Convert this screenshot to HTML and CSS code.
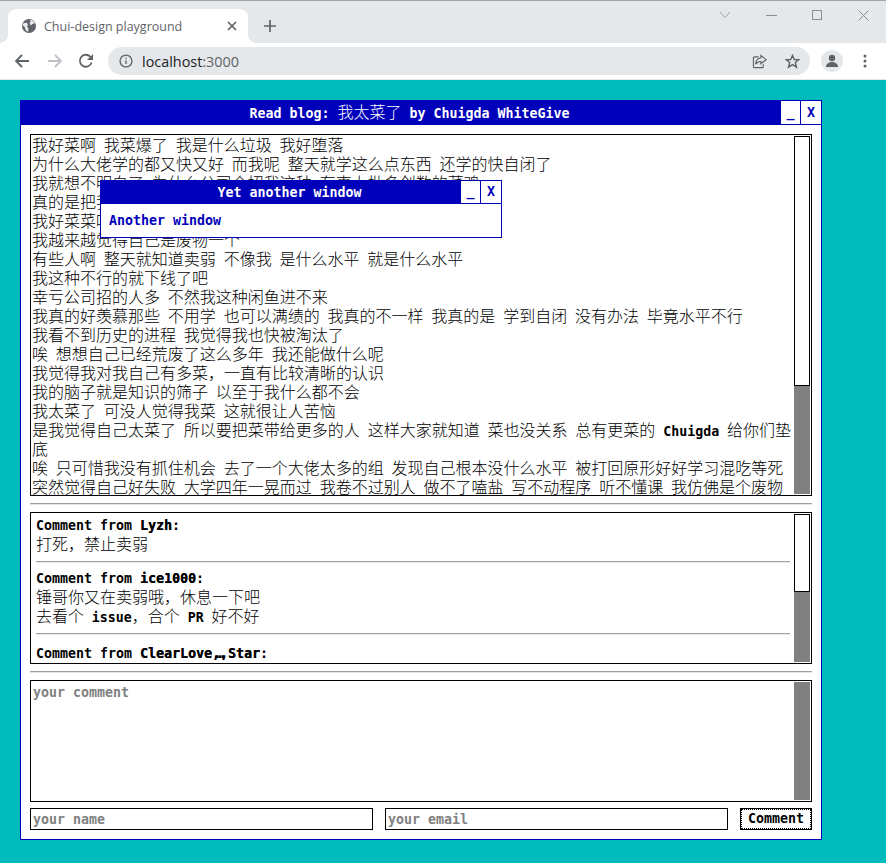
FILE: index.html
```html
<!DOCTYPE html>
<html lang="zh-CN">
<head>
<meta charset="utf-8">
<title>Chui-design playground</title>
<link rel="stylesheet" href="styles.css">
</head>
<body>
<header class="browser">
  <div class="tabstrip">
    <div class="tab">
      <svg class="favicon" viewBox="0 0 16 16" width="16" height="16"><circle cx="8" cy="8" r="7" fill="#5f6368"/><path d="M2 5.5 5.5 4.5 7 6.5 6 8.5 7.5 10.5 7 14 4.5 12 4 9.5 2 7.5zM9 1.8l3.5 1.2 1.5 2.5-2.5.2L10 7.5 8.5 5.5 9.5 4z" fill="#e8eaed"/></svg>
      <span class="tab-title">Chui-design playground</span>
      <svg class="tab-close" viewBox="0 0 10 10" width="10" height="10"><path d="M1 1l8 8M9 1 1 9" stroke="#5f6368" stroke-width="1.7" fill="none"/></svg>
    </div>
    <svg class="newtab" viewBox="0 0 12 12" width="12" height="12"><path d="M6 0v12M0 6h12" stroke="#5f6368" stroke-width="1.7" fill="none"/></svg>
    <div class="winctl">
      <svg class="wc wc-chev" viewBox="0 0 12 8" width="12" height="8"><path d="M1 1l5 5.5L11 1" stroke="#9aa0a6" fill="none"/></svg>
      <svg class="wc wc-min" viewBox="0 0 11 1" width="11" height="1"><path d="M0 .5h11" stroke="#8a8d90"/></svg>
      <svg class="wc wc-max" viewBox="0 0 10 10" width="10" height="10"><rect x=".5" y=".5" width="9" height="9" stroke="#8a8d90" fill="none"/></svg>
      <svg class="wc wc-x" viewBox="0 0 11 11" width="11" height="11"><path d="M.5.5l10 10M10.5.5l-10 10" stroke="#8a8d90" fill="none"/></svg>
    </div>
  </div>
  <div class="toolbar">
    <svg class="nav" viewBox="0 0 16 16" width="16" height="16"><path d="M15 8H2.5M8 2 2 8l6 6" stroke="#5f6368" stroke-width="1.8" fill="none"/></svg>
    <svg class="nav" viewBox="0 0 16 16" width="16" height="16"><path d="M1 8h12.5M8 2l6 6-6 6" stroke="#bdc1c6" stroke-width="1.8" fill="none"/></svg>
    <svg class="nav nav-reload" viewBox="0 0 16 16" width="16" height="16"><path d="M13.6 9.5A6 6 0 1 1 12.2 3.6L14 5.4" stroke="#5f6368" stroke-width="1.8" fill="none"/><path d="M15 1v6H9z" fill="#5f6368"/></svg>
    <div class="omnibox">
      <svg viewBox="0 0 16 16" width="14" height="14"><circle cx="8" cy="8" r="6.8" stroke="#5f6368" stroke-width="1.5" fill="none"/><path d="M8 7v4.5M8 4.2v1.6" stroke="#5f6368" stroke-width="1.5"/></svg>
      <span class="url">localhost<span class="url-port">:3000</span></span>
      <svg class="omni-share" viewBox="0 0 16 16" width="15" height="15"><path d="M7 3H2.5A1 1 0 0 0 1.500 4v9.500a1 1 0 0 0 1 1H11a1 1 0 0 0 1-1V11" stroke="#5f6368" stroke-width="1.200" fill="none"/><path d="M9.500 1.500 15 6l-5.500 4.500V8C7 8 5 9 4 11c0-4 2-6.500 5.500-7z" stroke="#5f6368" stroke-width="1.200" fill="none"/></svg>
      <svg class="omni-star" viewBox="0 0 16 16" width="15" height="15"><path d="M8 1.500 9.900 6h4.800l-3.700 3.100 1.200 4.900L8 11.300 3.800 14 5 9.100 1.300 6h4.800z" stroke="#5f6368" stroke-width="1.500" fill="none"/></svg>
    </div>
    <div class="avatar"><svg viewBox="0 0 16 16" width="16" height="16"><circle cx="8" cy="5" r="3.200" fill="#5f6368"/><path d="M2 14c0-3.500 3-5 6-5s6 1.500 6 5z" fill="#5f6368"/></svg></div>
    <svg class="kebab" viewBox="0 0 4 14" width="4" height="14"><circle cx="2" cy="2" r="1.500" fill="#5f6368"/><circle cx="2" cy="7" r="1.500" fill="#5f6368"/><circle cx="2" cy="12" r="1.500" fill="#5f6368"/></svg>
  </div>
</header>
<main class="desktop">
  <section class="window main-window">
    <div class="titlebar">
      <div class="title">Read blog: <span class="zh">我太菜了</span> by Chuigda WhiteGive</div>
      <button class="winbtn">_</button><button class="winbtn winbtn-x">X</button>
    </div>
    <div class="window-body">
      <div class="panel panel-blog">
        <div class="blog-text">
          <div class="zh-line">我好菜啊 我菜爆了 我是什么垃圾 我好堕落</div>
          <div class="zh-line">为什么大佬学的都又快又好 而我呢 整天就学这么点东西 还学的快自闭了</div>
          <div class="zh-line">我就想不明白了 为什么公司会招我这种 有事上批多创数的菜鸡</div>
          <div class="zh-line">真的是把我自己菜哭了</div>
          <div class="zh-line">我好菜菜呢</div>
          <div class="zh-line">我越来越觉得自己是废物一个</div>
          <div class="zh-line">有些人啊 整天就知道卖弱 不像我 是什么水平 就是什么水平</div>
          <div class="zh-line">我这种不行的就下线了吧</div>
          <div class="zh-line">幸亏公司招的人多 不然我这种闲鱼进不来</div>
          <div class="zh-line">我真的好羡慕那些 不用学 也可以满绩的 我真的不一样 我真的是 学到自闭 没有办法 毕竟水平不行</div>
          <div class="zh-line">我看不到历史的进程 我觉得我也快被淘汰了</div>
          <div class="zh-line">唉 想想自己已经荒废了这么多年 我还能做什么呢</div>
          <div class="zh-line">我觉得我对我自己有多菜，一直有比较清晰的认识</div>
          <div class="zh-line">我的脑子就是知识的筛子 以至于我什么都不会</div>
          <div class="zh-line">我太菜了 可没人觉得我菜 这就很让人苦恼</div>
          <div class="zh-line">是我觉得自己太菜了 所以要把菜带给更多的人 这样大家就知道 菜也没关系 总有更菜的 <b class="en">Chuigda</b> 给你们垫底</div>
          <div class="zh-line">唉 只可惜我没有抓住机会 去了一个大佬太多的组 发现自己根本没什么水平 被打回原形好好学习混吃等死</div>
          <div class="zh-line">突然觉得自己好失败 大学四年一晃而过 我卷不过别人 做不了嗑盐 写不动程序 听不懂课 我仿佛是个废物</div>
        </div>
        <div class="scrollbar"><div class="thumb thumb-blog"></div></div>
      </div>
      <hr class="sep">
      <div class="panel panel-comments">
        <div class="comments">
          <div class="comment-head"><b class="en">Comment from <span class="author">Lyzh</span>:</b></div>
          <div class="zh-line">打死，禁止卖弱</div>
          <hr class="comment-sep">
          <div class="comment-head"><b class="en">Comment from <span class="author">ice1000</span>:</b></div>
          <div class="zh-line">锤哥你又在卖弱哦，休息一下吧</div>
          <div class="zh-line">去看个 <b class="en">issue</b>，合个 <b class="en">PR</b> 好不好</div>
          <hr class="comment-sep comment-sep-last">
          <div class="comment-head"><b class="en">Comment from <span class="author">ClearLove<span class="author-gap">,…</span>,Star</span>:</b></div>
        </div>
        <div class="scrollbar"><div class="thumb thumb-comments"></div></div>
      </div>
      <hr class="sep">
      <div class="panel panel-editor">
        <textarea class="comment-input" placeholder="your comment"></textarea>
        <div class="scrollbar"></div>
      </div>
      <form class="comment-form">
        <input class="field" placeholder="your name">
        <input class="field" placeholder="your email">
        <button class="submit" type="button"><span class="submit-inner">Comment</span></button>
      </form>
    </div>
  </section>
  <section class="window float-window">
    <div class="titlebar">
      <div class="title">Yet another window</div>
      <button class="winbtn">_</button><button class="winbtn winbtn-x">X</button>
    </div>
    <div class="float-body">Another window</div>
  </section>
</main>
</body>
</html>
```
FILE: styles.css
```css
* { box-sizing: border-box; }
html, body { margin: 0; height: 863px; overflow: hidden; }
body { background: #00bbbb; font: bold 13.29px/19px "DejaVu Sans Mono", "Noto Sans CJK SC", monospace; color: #000; }

.browser { height: 80px; background: #fff; font-family: "Open Sans", "Noto Sans", sans-serif; font-weight: 400; border-bottom: 1px solid #e4e6e8; }
.tabstrip { height: 43px; background: #e5e8eb; border-top: 1px solid #a3a5a8; display: flex; align-items: flex-end; padding-left: 8px; position: relative; }
.tab { width: 240px; height: 34px; background: #fff; border-radius: 8px 8px 0 0; display: flex; align-items: center; padding: 0 11px 0 13px; position: relative; }
.tab::before, .tab::after { content: ""; position: absolute; bottom: 0; width: 8px; height: 8px; }
.tab::before { left: -8px; background: radial-gradient(circle at 0 0, #e5e8eb 7.500px, #fff 8px); }
.tab::after { right: -8px; background: radial-gradient(circle at 100% 0, #e5e8eb 7.500px, #fff 8px); }
.favicon { flex: none; }
.tab-title { margin-left: 7px; flex: 1; font-size: 12.500px; color: #5f6368; white-space: nowrap; }
.newtab { margin: 0 0 11px 16px; }
.wc { position: absolute; }
.wc-chev { left: 719px; top: 10px; }
.wc-min { left: 766px; top: 14px; }
.wc-max { left: 812px; top: 9px; }
.wc-x { left: 858px; top: 9px; }

.toolbar { height: 36px; display: flex; align-items: center; padding: 0 19px 0 14px; }
.nav { margin-right: 17px; flex: none; }
.nav-reload { margin-left: -2px; }
.omnibox { width: 702px; height: 28px; margin-left: -3px; background: #e5e8eb; border-radius: 14px; display: flex; align-items: center; padding: 0 10px 0 11px; flex: none; }
.url { margin-left: 9px; flex: 1; font-size: 14.400px; color: #202124; }
.url-port { color: #5f6368; }
.omni-share { margin-right: 18px; }
.avatar { width: 22px; height: 22px; margin-left: 11px; border-radius: 50%; background: #e5e8eb; display: flex; align-items: center; justify-content: center; flex: none; }
.kebab { margin-left: auto; flex: none; }

.desktop { padding: 20px; position: relative; }
.window { border: 1px solid #0000bb; background: #fff; }
.main-window { width: 802px; height: 740px; display: flex; flex-direction: column; }
.titlebar { height: 24px; margin: -1px -1px 0; background: #0000bb; display: flex; border: 1px solid #0000bb; color: #fff; flex: none; }
.main-window > .titlebar { height: 25px; }
.main-window > .titlebar .title { line-height: 25px; }
.title { flex: 1; text-align: center; line-height: 23px; padding-left: 17px; }
.winbtn { width: 19px; padding: 0; border: 0; background: #fff; color: #0000bb; font: inherit; line-height: 1; }
.winbtn-x { width: 20px; margin-left: 1px; }
.window-body { flex: 1; padding: 9px 9px 9px; display: flex; flex-direction: column; }

.panel { border: 1px solid #000; display: flex; overflow: hidden; padding: 1px; justify-content: space-between; flex: none; }
.panel-blog { height: 362px; }
.panel-comments { height: 152px; }
.panel-editor { height: 122px; }
.blog-text { width: 761px; font-weight: 400; margin-top: -1px; }
.scrollbar { width: 16px; background: #808080; flex: none; }
.thumb { background: #fff; border: 1px solid #000; }
.thumb-blog { height: 250px; }
.thumb-comments { height: 78px; }
.sep { height: 2px; width: 782px; margin: 7px 0; border: 0; background: linear-gradient(#a0a0a0 50%, #e4e4e4 50%); flex: none; }

.zh, .zh-line { font-family: "Noto Sans CJK SC", sans-serif; font-size: 16px; font-weight: 300; }
.zh { line-height: 1; }
.zh-line { word-spacing: 4.300px; }
.en { font-family: "DejaVu Sans Mono", monospace; font-size: 13.29px; font-weight: 700; word-spacing: 0; line-height: 1; }
.comments { width: 754px; padding: 2px 0 0 4px; box-sizing: content-box; flex: none; }
.comments .zh-line { margin: -1px 0 1px; }
.author { text-shadow: .4px 0 0 #000; }
.author-gap { letter-spacing: -4px; }
.comment-sep { height: 2px; margin: 8px 0 6px; border: 0; background: linear-gradient(#a0a0a0 50%, #e8e8e8 50%); }
.comment-sep-last { margin-bottom: 9px; }

.comment-input { flex: 1; border: 0; padding: 1px 1px; margin: 0; outline: 0; resize: none; font: inherit; background: transparent; }
::placeholder { color: #808080; opacity: 1; }
.comment-form { display: flex; justify-content: space-between; margin-top: 6px; height: 22px; }
.field { width: 343px; height: 22px; border: 1px solid #000; padding: 0 2px; margin: 0; font: inherit; outline: 0; background: #fff; }
.submit { width: 72px; height: 22px; margin-left: 0; border: 1px solid #000; padding: 0; background: #fff; font: inherit; }
.submit-inner { display: block; height: 20px; border: 1px dotted #000; line-height: 17px; color: #000; }

.float-window { position: absolute; left: 100px; top: 100px; width: 402px; height: 58px; }
.float-body { padding: 7px 8px; color: #0000bb; line-height: 19px; }
```
